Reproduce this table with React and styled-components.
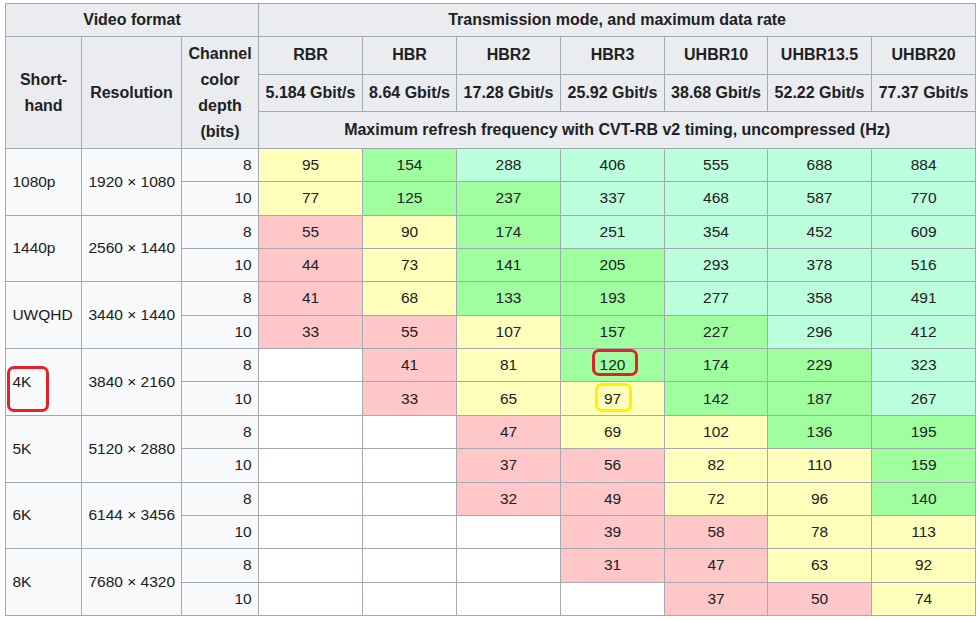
import React from "react";
import styled, { createGlobalStyle } from "styled-components";

const GlobalStyle = createGlobalStyle`
  html, body {
    margin: 0;
    padding: 0;
    background: #ffffff;
  }
  body {
    font-family: "Liberation Sans", Arial, sans-serif;
    font-size: 15.5px;
    color: #202122;
  }
`;

const modes = [
  { name: "RBR", rate: "5.184 Gbit/s" },
  { name: "HBR", rate: "8.64 Gbit/s" },
  { name: "HBR2", rate: "17.28 Gbit/s" },
  { name: "HBR3", rate: "25.92 Gbit/s" },
  { name: "UHBR10", rate: "38.68 Gbit/s" },
  { name: "UHBR13.5", rate: "52.22 Gbit/s" },
  { name: "UHBR20", rate: "77.37 Gbit/s" },
];

const colWidths = [76, 100, 77, 104, 94, 104, 104, 103, 104, 104];

const formats = [
  {
    name: "1080p",
    res: "1920 × 1080",
    rows: [
      [95, 154, 288, 406, 555, 688, 884],
      [77, 125, 237, 337, 468, 587, 770],
    ],
  },
  {
    name: "1440p",
    res: "2560 × 1440",
    rows: [
      [55, 90, 174, 251, 354, 452, 609],
      [44, 73, 141, 205, 293, 378, 516],
    ],
  },
  {
    name: "UWQHD",
    res: "3440 × 1440",
    rows: [
      [41, 68, 133, 193, 277, 358, 491],
      [33, 55, 107, 157, 227, 296, 412],
    ],
  },
  {
    name: "4K",
    res: "3840 × 2160",
    mark: true,
    rows: [
      [null, 41, 81, 120, 174, 229, 323],
      [null, 33, 65, 97, 142, 187, 267],
    ],
  },
  {
    name: "5K",
    res: "5120 × 2880",
    rows: [
      [null, null, 47, 69, 102, 136, 195],
      [null, null, 37, 56, 82, 110, 159],
    ],
  },
  {
    name: "6K",
    res: "6144 × 3456",
    rows: [
      [null, null, 32, 49, 72, 96, 140],
      [null, null, null, 39, 58, 78, 113],
    ],
  },
  {
    name: "8K",
    res: "7680 × 4320",
    rows: [
      [null, null, null, 31, 47, 63, 92],
      [null, null, null, null, 37, 50, 74],
    ],
  },
];

// highlighted cells: [format, depth row, column] -> box geometry
const marks = {
  "4K-0-3": { color: "#e6202a", left: 31, top: 0, w: 46, h: 27 },
  "4K-1-3": { color: "#fff000", left: 34, top: 1, w: 37, h: 29 },
};

const levelFor = (hz) => {
  if (hz === null) return "none";
  if (hz < 60) return "low";
  if (hz < 120) return "mid";
  if (hz < 240) return "high";
  return "top";
};

const fills = {
  none: "#ffffff",
  low: "#ffc7c7",
  mid: "#ffffbb",
  high: "#9fff9f",
  top: "#bbffdd",
};

const Page = styled.div`
  padding: 3px 0 0 5px;
`;

const Table = styled.table`
  border-collapse: collapse;
  table-layout: fixed;
  width: 970px;
  border: 1px solid #a2a9b1;
  line-height: 26px;
  white-space: nowrap;
`;

const HeadCell = styled.th`
  background: #eaecf0;
  border: 1px solid #a2a9b1;
  padding: 3.2px 5px;
  font-size: 16px;
  font-weight: bold;
  text-align: center;
  vertical-align: middle;
  white-space: ${(p) => (p.$wrap ? "normal" : "nowrap")};
`;

const LabelCell = styled.td`
  position: relative;
  background: #f8f9fa;
  border: 1px solid #a2a9b1;
  padding: 3.2px 6.4px;
  text-align: ${(p) => (p.$right ? "right" : "left")};
  vertical-align: middle;
`;

const ValueCell = styled.td`
  position: relative;
  background: ${(p) => fills[p.$level]};
  border: 1px solid #a2a9b1;
  padding: 3.2px 6.4px;
  text-align: center;
  vertical-align: middle;
`;

const Mark = styled.span`
  position: absolute;
  left: ${(p) => p.$left}px;
  top: ${(p) => p.$top}px;
  width: ${(p) => p.$w}px;
  height: ${(p) => p.$h}px;
  box-sizing: border-box;
  border: 3px solid ${(p) => p.$color};
  border-radius: 7px;
  pointer-events: none;
`;

export default function App() {
  return (
    <Page>
      <GlobalStyle />
      <Table>
        <colgroup>
          {colWidths.map((w, i) => (
            <col key={i} style={{ width: w }} />
          ))}
        </colgroup>
        <thead>
          <tr>
            <HeadCell colSpan={3}>Video format</HeadCell>
            <HeadCell colSpan={7}>
              Transmission mode, and maximum data rate
            </HeadCell>
          </tr>
          <tr>
            <HeadCell rowSpan={3} $wrap>
              Short-hand
            </HeadCell>
            <HeadCell rowSpan={3}>Resolution</HeadCell>
            <HeadCell rowSpan={3} $wrap>
              Channel color depth (bits)
            </HeadCell>
            {modes.map((m) => (
              <HeadCell key={m.name}>{m.name}</HeadCell>
            ))}
          </tr>
          <tr>
            {modes.map((m) => (
              <HeadCell key={m.name}>{m.rate}</HeadCell>
            ))}
          </tr>
          <tr>
            <HeadCell colSpan={7}>
              Maximum refresh frequency with CVT-RB v2 timing, uncompressed
              (Hz)
            </HeadCell>
          </tr>
        </thead>
        <tbody>
          {formats.map((f) =>
            f.rows.map((vals, r) => (
              <tr key={f.name + r}>
                {r === 0 && (
                  <>
                    <LabelCell rowSpan={2}>
                      {f.name}
                      {f.mark && (
                        <Mark
                          $color="#e6202a"
                          $left={1}
                          $top={17}
                          $w={42}
                          $h={46}
                        />
                      )}
                    </LabelCell>
                    <LabelCell rowSpan={2}>{f.res}</LabelCell>
                  </>
                )}
                <LabelCell $right>{r === 0 ? 8 : 10}</LabelCell>
                {vals.map((v, c) => {
                  const m = marks[`${f.name}-${r}-${c}`];
                  return (
                    <ValueCell key={c} $level={levelFor(v)}>
                      {v}
                      {m && (
                        <Mark
                          $color={m.color}
                          $left={m.left}
                          $top={m.top}
                          $w={m.w}
                          $h={m.h}
                        />
                      )}
                    </ValueCell>
                  );
                })}
              </tr>
            ))
          )}
        </tbody>
      </Table>
    </Page>
  );
}
